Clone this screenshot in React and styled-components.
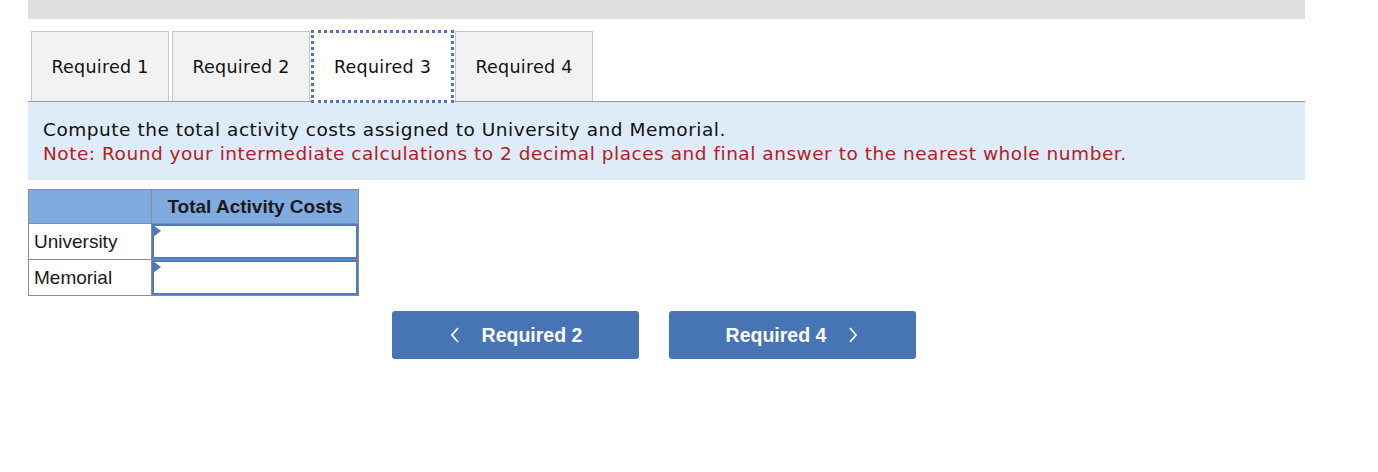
import React from 'react'
import styled, { createGlobalStyle } from 'styled-components'

const Global = createGlobalStyle`
  body {
    margin: 0;
    background: #fff;
    font-family: "DejaVu Sans", Verdana, sans-serif;
  }
`

const Page = styled.div`
  width: 1277px;
  margin-left: 28px;
`

const TopBar = styled.div`
  height: 19px;
  background: #e0e0e0;
`

const Tabs = styled.div`
  display: flex;
  align-items: flex-end;
  gap: 3px;
  margin-top: 12px;
  padding-left: 3px;
  border-bottom: 1px solid #9a9a9a;
  height: 70px;
`

const Tab = styled.div`
  box-sizing: border-box;
  width: ${({ active }) => (active ? '143px' : '138px')};
  height: ${({ active }) => (active ? '73px' : '70px')};
  margin-bottom: ${({ active }) => (active ? '-2px' : '0')};
  display: flex;
  align-items: center;
  justify-content: center;
  padding-top: ${({ active }) => (active ? '1px' : '0')};
  font-size: 17.5px;
  letter-spacing: 0.25px;
  color: #111;
  background: ${({ active }) => (active ? '#fff' : '#f2f2f2')};
  border: ${({ active }) => (active ? '3px dotted #4a77c0' : '1px solid #c6c6c6')};
  border-bottom: ${({ active }) => (active ? '3px dotted #4a77c0' : 'none')};
  position: relative;
  z-index: ${({ active }) => (active ? 1 : 0)};
  margin-left: ${({ active }) => (active ? '-2px' : '0')};
  margin-right: ${({ active }) => (active ? '-2px' : '0')};
`

const Instructions = styled.div`
  background: #deebf8;
  padding: 16px 15px 14px;
  font-size: 18.5px;
  letter-spacing: 0.52px;
  line-height: 24px;
  color: #111;
`

const Note = styled.div`
  color: #b3211c;
`

const Table = styled.table`
  margin-top: 9px;
  border-collapse: collapse;
  font-family: "Liberation Sans", Arial, sans-serif;
  font-size: 19px;
`

const HeadCell = styled.th`
  background: #80abe0;
  border: 1px solid #8c8c8c;
  height: 33px;
  padding: 0 12px;
  font-weight: bold;
  color: #1a1a1a;
  text-align: center;
`

const RowLabel = styled.td`
  border: 1px solid #8c8c8c;
  width: 123px;
  height: 35px;
  padding: 0 0 0 5px;
  box-sizing: border-box;
  color: #1a1a1a;
`

const InputCell = styled.td`
  border: 1px solid #8c8c8c;
  padding: 0;
  width: 206px;
  height: 35px;
  position: relative;
`

const Field = styled.input`
  box-sizing: border-box;
  display: block;
  width: 100%;
  height: 35px;
  border: 2px solid #4f7bbd;
  background: #fff;
  outline: none;
`

const Marker = styled.span`
  position: absolute;
  left: 1px;
  top: 1px;
  width: 0;
  height: 0;
  border-top: 6px solid transparent;
  border-bottom: 6px solid transparent;
  border-left: 8px solid #4a78c2;
`

const Buttons = styled.div`
  display: flex;
  gap: 30px;
  padding-left: 364px;
  margin-top: 15px;
`

const NavButton = styled.button`
  width: 247px;
  height: 48px;
  border: none;
  border-radius: 3px;
  background: #4674b4;
  color: #fff;
  font-family: "Liberation Sans", Arial, sans-serif;
  font-weight: bold;
  font-size: 19.5px;
  display: flex;
  align-items: center;
  justify-content: center;
  gap: 21px;
  padding: 0;
`

const Chevron = ({ dir }) => (
  <svg width="12" height="18" viewBox="0 0 12 18">
    <path
      d={dir === 'left' ? 'M9 2 L3 9 L9 16' : 'M3 2 L9 9 L3 16'}
      fill="none"
      stroke="#fff"
      strokeWidth="1.8"
    />
  </svg>
)

const rows = ['University', 'Memorial']

export default function App() {
  return (
    <>
      <Global />
      <Page>
        <TopBar />
        <Tabs>
          <Tab>Required 1</Tab>
          <Tab>Required 2</Tab>
          <Tab active>Required 3</Tab>
          <Tab>Required 4</Tab>
        </Tabs>
        <Instructions>
          <div>Compute the total activity costs assigned to University and Memorial.</div>
          <Note>
            Note: Round your intermediate calculations to 2 decimal places and final answer to the nearest whole number.
          </Note>
        </Instructions>
        <Table>
          <thead>
            <tr>
              <HeadCell />
              <HeadCell>Total Activity Costs</HeadCell>
            </tr>
          </thead>
          <tbody>
            {rows.map((r) => (
              <tr key={r}>
                <RowLabel>{r}</RowLabel>
                <InputCell>
                  <Field />
                  <Marker />
                </InputCell>
              </tr>
            ))}
          </tbody>
        </Table>
        <Buttons>
          <NavButton>
            <Chevron dir="left" />
            Required 2
          </NavButton>
          <NavButton>
            Required 4
            <Chevron dir="right" />
          </NavButton>
        </Buttons>
      </Page>
    </>
  )
}
